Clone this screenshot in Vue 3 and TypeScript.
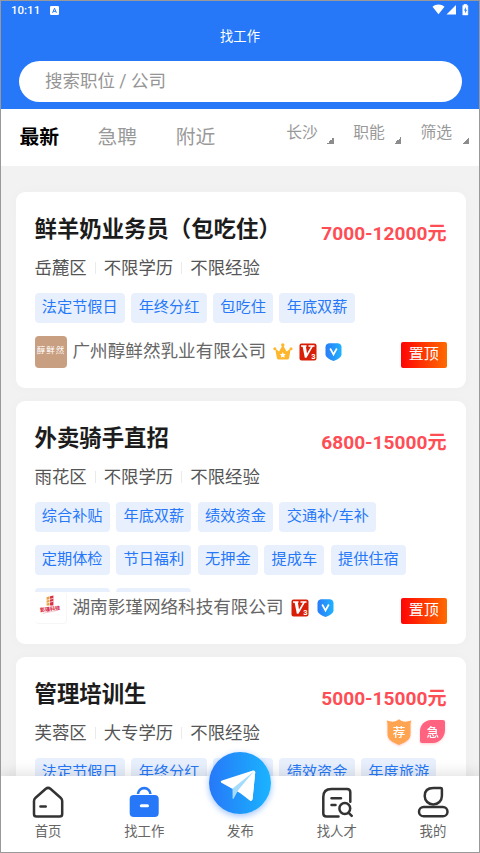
<script setup lang="ts">
import { ref } from 'vue'

interface Job {
  title: string
  salary: string
  meta: string[]
  tags: string[]
  company?: string
  logo?: 'chun' | 'ying'
  crown?: boolean
  hot?: boolean
}

const tabs = ['最新', '急聘', '附近']
const filters = ['长沙', '职能', '筛选']
const activeTab = ref(0)
const keyword = ref('')

const jobs: Job[] = [
  {
    title: '鲜羊奶业务员（包吃住）',
    salary: '7000-12000元',
    meta: ['岳麓区', '不限学历', '不限经验'],
    tags: ['法定节假日', '年终分红', '包吃住', '年底双薪'],
    company: '广州醇鲜然乳业有限公司',
    logo: 'chun',
    crown: true
  },
  {
    title: '外卖骑手直招',
    salary: '6800-15000元',
    meta: ['雨花区', '不限学历', '不限经验'],
    tags: ['综合补贴', '年底双薪', '绩效资金', '交通补/车补', '定期体检', '节日福利', '无押金', '提成车', '提供住宿', '法定假日', '年终分红'],
    company: '湖南影瑾网络科技有限公司',
    logo: 'ying'
  },
  {
    title: '管理培训生',
    salary: '5000-15000元',
    meta: ['芙蓉区', '大专学历', '不限经验'],
    tags: ['法定节假日', '年终分红', '包吃住', '绩效资金', '年度旅游'],
    hot: true
  }
]
</script>

<template>
  <div class="phone">
    <header class="header">
      <div class="status">
        <span class="time">10:11</span>
        <svg class="status-app" viewBox="0 0 9 9"><rect width="9" height="9" rx="1.2" fill="#fff" /><path d="M2.6 6.8 4.5 2.2l1.9 4.6M3.3 5.4h2.4" fill="none" stroke="#2678f8" stroke-width="1" /></svg>
        <svg class="status-icons" viewBox="0 0 38 12">
          <path d="M0.5 2.7C4 -0.3 9 -0.3 12.5 2.7L6.5 10.3z" fill="#fff" />
          <path d="M14.5 10.6 24 1v9.6z" fill="#fff" />
          <path d="M32 0.2h2.6v1.2h1.2v9.5h-5V1.4h1.2z" fill="#fff" stroke="#fff" stroke-width="0.6" stroke-linejoin="round" />
          <path d="M33.9 2.9 32 6.4h1.2v3L35 5.8h-1.2z" fill="#2678f8" />
        </svg>
      </div>
      <h1 class="page-title">找工作</h1>
      <input v-model="keyword" class="search" placeholder="搜索职位 / 公司" />
    </header>

    <div class="toolbar">
      <div class="tabs">
        <span
          v-for="(tab, i) in tabs"
          :key="tab"
          class="tab"
          :class="{ active: i === activeTab }"
          @click="activeTab = i"
        >{{ tab }}</span>
      </div>
      <div class="filters">
        <span v-for="f in filters" :key="f" class="filter">{{ f }}<i class="corner"></i></span>
      </div>
    </div>

    <main class="list">
      <section v-for="job in jobs" :key="job.title" class="card">
        <div class="card-head">
          <h2>{{ job.title }}</h2>
          <span class="salary">{{ job.salary }}</span>
        </div>
        <div class="meta">
          <span v-for="m in job.meta" :key="m" class="meta-item">{{ m }}</span>
          <svg v-if="job.hot" class="hot" viewBox="0 0 60 28">
            <path d="M13 1.2C15 3 18 4 21 3.5L25.3 2.5 24.5 5.5V16c0 6-5.500 8.600-11.500 11C7 24.600 1.500 22 1.500 16V5.500L0.700 2.500 5 3.500C8 4 11 3 13 1.200z" fill="#ffa552" />
            <text x="13" y="18.600" class="hot-text">荐</text>
            <path d="M45 2h12q2 0 2 2v8c0 7-6 13-12 13H36q-2 0-2-2V13C34 7 39 2 45 2z" fill="#ff6380" />
            <text x="46.800" y="18.600" class="hot-text">急</text>
          </svg>
        </div>
        <div class="tags">
          <span v-for="t in job.tags" :key="t" class="tag">{{ t }}</span>
        </div>
        <div v-if="job.company" class="company">
          <div v-if="job.logo === 'chun'" class="logo logo-chun">醇鲜然</div>
          <svg v-else class="logo logo-ying" viewBox="0 0 32 32">
            <path d="M12 5.500l3-1v9.500h-3z" fill="#e9a03c" />
            <path d="M15.500 4.500l3.500-1v10.500h-3.500z" fill="#d8304a" />
            <path d="M12 8.500l7-2M12 11.500l7-2" stroke="#fff" stroke-width="0.700" />
            <text x="15.500" y="19.500" class="ying-text" transform="rotate(-7 15.500 17)">影瑾科技</text>
            <path d="M8 22l15-3" stroke="#efb6c1" stroke-width="0.800" />
          </svg>
          <span class="company-name">{{ job.company }}</span>
          <svg v-if="job.crown" class="crown" viewBox="0 0 20 18">
            <path d="M2.200 5.500 6 8.500 9.800 2l3.800 6.500 4.200-3-1.700 9.500q-.3 1.500-1.800 1.500H5.700q-1.500 0-1.800-1.500z" fill="#ffb62b" />
            <circle cx="1.800" cy="5.700" r="1.500" fill="#ffb62b" />
            <circle cx="9.800" cy="2" r="1.700" fill="#ffb62b" />
            <circle cx="18" cy="5.700" r="1.500" fill="#ffb62b" />
            <path d="M9.800 9l.9 1.900 2.100.2-1.500 1.500.4 2.100-1.900-1-1.900 1 .4-2.100-1.500-1.500 2.100-.2z" fill="#fff" />
          </svg>
          <svg class="vip" viewBox="0 0 18 18">
            <rect x="0.500" y="0.500" width="17" height="17" rx="2" fill="#d81e06" />
            <path d="M2 3h5.500M9.500 3h6" stroke="#fff" stroke-width="1.300" />
            <path d="M3.500 3h3.300L8 10.500 12.300 3h1.900L7.500 14.800H5.800z" fill="#fff" />
            <text x="14.400" y="15.800" class="vip-num">3</text>
          </svg>
          <svg class="verify" viewBox="0 0 17 18">
            <defs>
              <linearGradient id="verifyFill"><stop offset="0" stop-color="#2a7cf8" /><stop offset="1" stop-color="#1fb2ff" /></linearGradient>
            </defs>
            <path d="M4 .3h9q3.500.7 3.500 4V12q-1 3.500-8 6-7-2.500-8-6V4.300Q.5 1 4 .3z" fill="url(#verifyFill)" />
            <path d="M5.200 5.500l3.300 6L11.800 5.500" fill="none" stroke="#fff" stroke-width="1.700" />
          </svg>
          <span class="top-badge">置顶</span>
        </div>
      </section>
    </main>

    <nav class="nav">
      <a class="nav-item">
        <svg class="nav-icon" viewBox="0 0 32 32">
          <path d="M13.800 2.800 3.600 11.700Q2 13.100 2 15V28q0 2.600 2.600 2.600h23Q30.200 30.600 30.200 28V15q0-1.900-1.600-3.300L18.400 2.800q-2.300-1.800-4.600 0z" fill="none" stroke="#333" stroke-width="2.500" />
          <path d="M8.500 20.500h5.200" stroke="#333" stroke-width="2.600" stroke-linecap="round" />
        </svg>
        <span>首页</span>
      </a>
      <a class="nav-item">
        <svg class="nav-icon" viewBox="0 0 32 32">
          <path d="M10 8a6.200 5.900 0 0 1 12.400 0" fill="none" stroke="#2678f8" stroke-width="2.600" />
          <rect x="1.700" y="9" width="29" height="22" rx="4" fill="#2678f8" />
          <path d="M13.300 19.700h6.200" stroke="#fff" stroke-width="3" stroke-linecap="round" />
        </svg>
        <span>找工作</span>
      </a>
      <a class="nav-item">
        <span class="publish">
          <svg viewBox="0 0 62 62">
            <path d="M12 30.500Q11 29 13 28.500L44 18.600q2.400-.6 2.200 1.800L43.500 47q-.5 2.500-2.900 1.300L31 41z" fill="#fff" />
            <path d="M23.500 36.500 45.500 19 29 38.500 24.500 46.800q-.9.800-.9-.8z" fill="#a6dcfb" />
            <path d="M45.500 19 29.500 38 41 48.500q2 .7 2.600-1.500l2.600-26.500z" fill="#fff" />
          </svg>
        </span>
        <span>发布</span>
      </a>
      <a class="nav-item">
        <svg class="nav-icon" viewBox="0 0 32 32">
          <g fill="none" stroke="#333" stroke-width="2.500" stroke-linecap="round">
            <path d="M17.500 30.500H5.500Q2.300 30.500 2.300 27.500V11q0-8 8-8H26q3.300 0 3.300 3.300v9.500" />
            <path d="M10.500 12.300h9.500M10.500 19h4" />
            <circle cx="23.800" cy="22.500" r="5.400" />
            <path d="M27.700 26.800l3 3" />
          </g>
        </svg>
        <span>找人才</span>
      </a>
      <a class="nav-item">
        <svg class="nav-icon" viewBox="0 0 32 32">
          <g fill="none" stroke="#333" stroke-width="2.500">
            <path d="M16.300 2.100h7.400q1.200 0 1.200 1.200V10a8.600 8.500 0 0 1-17.200 0Q7.700 2.100 16.300 2.100z" />
            <rect x="2" y="21" width="28.500" height="9.300" rx="4.650" />
          </g>
        </svg>
        <span>我的</span>
      </a>
    </nav>
  </div>
</template>

<style>
body {
  margin: 0;
}
</style>

<style scoped>
.phone {
  box-sizing: border-box;
  width: 480px;
  height: 853px;
  border: 1px solid #999;
  display: flex;
  flex-direction: column;
  overflow: hidden;
  background: #f2f2f2;
  font-family: Roboto, "Noto Sans CJK SC", sans-serif;
  color: #555;
}

.header {
  height: 108px;
  flex-shrink: 0;
  background: #2678f8;
  color: #fff;
}

.status {
  height: 18px;
  display: flex;
  align-items: center;
  padding: 0 9px 0 10px;
}

.time {
  font-size: 11.5px;
  font-weight: 500;
  width: 39px;
}

.status-app {
  width: 9px;
  height: 9px;
}

.status-icons {
  width: 38px;
  height: 12px;
  margin-left: auto;
}

.page-title {
  margin: 7px 0 13px;
  text-align: center;
  font-size: 13.3px;
  font-weight: 400;
  line-height: 22px;
}

.search {
  display: block;
  box-sizing: border-box;
  width: 443px;
  height: 41px;
  margin: 0 18px;
  padding: 0 26px 1px;
  border: 0;
  border-radius: 21px;
  outline: none;
  background: #fff;
  font-family: inherit;
  font-size: 17.5px;
  color: #333;
}

.search::placeholder {
  color: #959595;
}

.toolbar {
  height: 57px;
  flex-shrink: 0;
  display: flex;
  justify-content: space-between;
  background: #fff;
}

.tabs {
  display: flex;
  gap: 38.5px;
  padding-left: 18.5px;
}

.tab {
  font-size: 19.8px;
  line-height: 57px;
  color: #999;
}

.tab.active {
  color: #000;
  font-weight: 700;
}

.filters {
  display: flex;
  gap: 19px;
  padding: 9px 10.5px 0 0;
}

.filter {
  display: flex;
  align-items: flex-end;
  height: 26px;
  font-size: 15.8px;
  line-height: 22px;
  color: #999;
}

.corner {
  width: 7px;
  height: 7px;
  margin-left: 9.5px;
  background: linear-gradient(135deg, transparent 50%, #8c8c8c 50%);
}

.list {
  flex: 1;
  min-height: 0;
  overflow: hidden;
  padding: 25.5px 13.5px 0 14.5px;
}

.card {
  box-sizing: border-box;
  margin-bottom: 13px;
  padding: 22px 19px 20px;
  border-radius: 9px;
  background: #fff;
  box-shadow: 0 0 14px rgba(0, 0, 0, 0.025);
}

.card-head {
  display: flex;
  justify-content: space-between;
  height: 30px;
}

h2 {
  margin: 0;
  font-size: 22.4px;
  font-weight: 700;
  line-height: 31px;
  color: #1c1c1c;
}

.salary {
  padding-top: 5px;
  font-size: 19.1px;
  font-weight: 700;
  line-height: 30px;
  color: #ff4d55;
}

.meta {
  display: flex;
  align-items: center;
  height: 24px;
  margin: 11px 0 14px;
  font-size: 17.4px;
}

.meta-item + .meta-item {
  display: flex;
  align-items: center;
}

.meta-item + .meta-item::before {
  content: '';
  width: 1px;
  height: 12px;
  margin: 3px 8px 0;
  background: #eaeaea;
}

.hot {
  width: 60px;
  height: 28px;
  margin: 1px 1px 0 auto;
  filter: drop-shadow(0 1px 1px rgba(255, 90, 90, 0.3));
}

.hot-text {
  font-size: 12.5px;
  font-weight: 500;
  text-anchor: middle;
  fill: #fff;
}

.tags {
  display: flex;
  flex-wrap: wrap;
  align-content: flex-start;
  column-gap: 6.3px;
  max-height: 90px;
  overflow: hidden;
}

.tag {
  height: 30px;
  margin-bottom: 13.3px;
  padding: 0 7.3px;
  border-radius: 4px;
  background: #e8f0fe;
  font-size: 15.2px;
  line-height: 29.5px;
  color: #2678f8;
}

.company {
  display: flex;
  align-items: center;
  height: 32px;
}

.logo {
  width: 32px;
  height: 32px;
  margin-right: 6px;
  border-radius: 4px;
}

.logo-chun {
  background: #c99f82;
  color: #fff;
  font-size: 8.5px;
  line-height: 29px;
  letter-spacing: 1px;
  text-indent: 1px;
  text-align: center;
  white-space: nowrap;
}

.logo-ying {
  box-sizing: border-box;
  border: solid #f6f6f6;
  border-width: 0 1px 1px 0;
}

.ying-text {
  font-size: 5.2px;
  font-weight: 900;
  text-anchor: middle;
  fill: #d8304a;
}

.company-name {
  font-size: 17.6px;
  line-height: 30px;
  margin: 0 7px 2px 0;
  color: #666;
}

.crown {
  width: 20px;
  height: 18px;
  margin-right: 6px;
}

.vip {
  width: 18px;
  height: 18px;
  margin-right: 8px;
}

.vip-num {
  font-size: 7.5px;
  font-weight: 700;
  text-anchor: middle;
  fill: #fff;
}

.verify {
  width: 17px;
  height: 18px;
}

.top-badge {
  width: 45.5px;
  height: 26px;
  margin: 6px 0 0 auto;
  border-radius: 2px;
  background: linear-gradient(90deg, #ff0505, #ff6a00);
  color: #fff;
  font-size: 15px;
  line-height: 25.5px;
  text-align: center;
}

.nav {
  position: relative;
  flex-shrink: 0;
  display: flex;
  height: 76.5px;
  margin: 0 -2px 0 -1px;
  background: #fff;
  box-shadow: 0 -2px 14px rgba(0, 0, 0, 0.13);
}

.nav-item {
  position: relative;
  flex: 1;
  display: flex;
  flex-direction: column;
  align-items: center;
  justify-content: flex-end;
  padding-bottom: 10.5px;
  font-size: 13.4px;
  line-height: 20px;
  color: #666;
}

.nav-icon {
  width: 32px;
  height: 32px;
  margin-bottom: 4px;
}

/* round button rising over the bar */
.publish {
  position: absolute;
  left: 17px;
  top: -23.5px;
  width: 62px;
  height: 62px;
  border-radius: 50%;
  background: linear-gradient(90deg, #2678f8, #1ab4ff);
  box-shadow: 0 2px 6px rgba(38, 120, 248, 0.45);
}

.publish svg {
  display: block;
  width: 62px;
  height: 62px;
}
</style>
